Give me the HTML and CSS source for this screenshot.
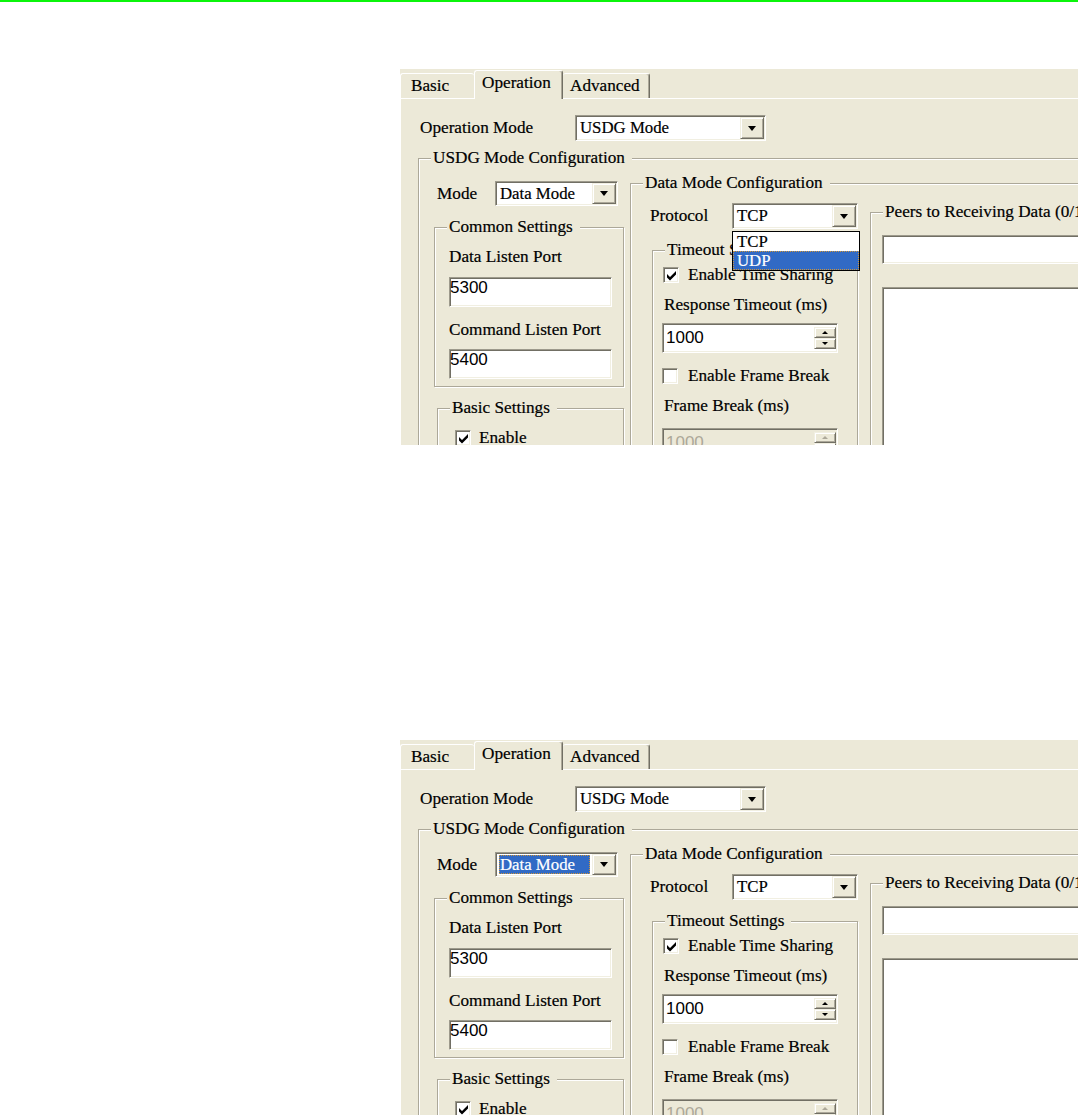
FILE: index.html
```html
<!DOCTYPE html>
<html lang="en">
<head>
  <meta charset="UTF-8" />
  <title>USDG Mode Settings</title>
  <link rel="stylesheet" href="styles.css">
</head>
<body>

  <div class="topline"></div>

  <!-- protocol drop-down open -->
  <div class="shot shot-1">
    <div class="tabs">
      <div class="tab tab-basic">Basic</div>
      <div class="tab tab-op">Operation</div>
      <div class="tab tab-adv">Advanced</div>
    </div>
    <div class="page">
      <div class="row op-row">
        <span class="lbl op-lbl">Operation Mode</span>
        <div class="combo combo-usdg"><span class="combo-text">USDG Mode</span><span class="combo-btn"></span></div>
      </div>
      <fieldset class="group usdg">
        <legend>USDG Mode Configuration</legend>
        <div class="usdg-body">
          <div class="usdg-left">
            <div class="row mode-row">
              <span class="lbl mode-lbl">Mode</span>
              <div class="combo combo-mode"><span class="combo-text">Data Mode</span><span class="combo-btn"></span></div>
            </div>
            <fieldset class="group common">
              <legend>Common Settings</legend>
              <div class="lbl field-lbl">Data Listen Port</div>
              <div class="edit port">5300</div>
              <div class="lbl field-lbl cmd-lbl">Command Listen Port</div>
              <div class="edit port cmd-port">5400</div>
            </fieldset>
            <fieldset class="group basic">
              <legend>Basic Settings</legend>
              <div class="row check-row basic-row">
                <span class="chk"><svg width="11" height="11" viewBox="0 0 11 11"><polygon points="1,4 4,7 10,1 10,4.5 4,10.5 1,7.5" fill="#000"/></svg></span>
                <span class="lbl">Enable</span>
              </div>
            </fieldset>
          </div>
          <fieldset class="group datamode">
            <legend>Data Mode Configuration</legend>
            <div class="dm-body">
              <div class="dm-left">
                <div class="row proto-row">
                  <span class="lbl proto-lbl">Protocol</span>
                  <div class="combo combo-proto">
                    <span class="combo-text">TCP</span><span class="combo-btn"></span>
                    <div class="droplist">
                      <div class="drop-item">TCP</div>
                      <div class="drop-item sel">UDP</div>
                    </div>
                  </div>
                </div>
                <fieldset class="group timeout">
                  <legend>Timeout Settings</legend>
                  <div class="row check-row share-row">
                    <span class="chk"><svg width="11" height="11" viewBox="0 0 11 11"><polygon points="1,4 4,7 10,1 10,4.5 4,10.5 1,7.5" fill="#000"/></svg></span>
                    <span class="lbl">Enable Time Sharing</span>
                  </div>
                  <div class="lbl sub-lbl">Response Timeout (ms)</div>
                  <div class="spin">
                    <span class="spin-text">1000</span>
                    <span class="spin-btns"><span class="up"></span><span class="down"></span></span>
                  </div>
                  <div class="row check-row break-row">
                    <span class="chk"></span>
                    <span class="lbl">Enable Frame Break</span>
                  </div>
                  <div class="lbl sub-lbl">Frame Break (ms)</div>
                  <div class="spin disabled">
                    <span class="spin-text">1000</span>
                    <span class="spin-btns"><span class="up"></span><span class="down"></span></span>
                  </div>
                </fieldset>
              </div>
              <fieldset class="group peers">
                <legend>Peers to Receiving Data (0/16)</legend>
                <div class="edit peer-edit"></div>
                <div class="listbox"></div>
              </fieldset>
            </div>
          </fieldset>
        </div>
      </fieldset>
    </div>
  </div>

  <!-- mode combo focused -->
  <div class="shot shot-2">
    <div class="tabs">
      <div class="tab tab-basic">Basic</div>
      <div class="tab tab-op">Operation</div>
      <div class="tab tab-adv">Advanced</div>
    </div>
    <div class="page">
      <div class="row op-row">
        <span class="lbl op-lbl">Operation Mode</span>
        <div class="combo combo-usdg"><span class="combo-text">USDG Mode</span><span class="combo-btn"></span></div>
      </div>
      <fieldset class="group usdg">
        <legend>USDG Mode Configuration</legend>
        <div class="usdg-body">
          <div class="usdg-left">
            <div class="row mode-row">
              <span class="lbl mode-lbl">Mode</span>
              <div class="combo combo-mode focus"><span class="combo-text">Data Mode</span><span class="combo-btn"></span></div>
            </div>
            <fieldset class="group common">
              <legend>Common Settings</legend>
              <div class="lbl field-lbl">Data Listen Port</div>
              <div class="edit port">5300</div>
              <div class="lbl field-lbl cmd-lbl">Command Listen Port</div>
              <div class="edit port cmd-port">5400</div>
            </fieldset>
            <fieldset class="group basic">
              <legend>Basic Settings</legend>
              <div class="row check-row basic-row">
                <span class="chk"><svg width="11" height="11" viewBox="0 0 11 11"><polygon points="1,4 4,7 10,1 10,4.5 4,10.5 1,7.5" fill="#000"/></svg></span>
                <span class="lbl">Enable</span>
              </div>
            </fieldset>
          </div>
          <fieldset class="group datamode">
            <legend>Data Mode Configuration</legend>
            <div class="dm-body">
              <div class="dm-left">
                <div class="row proto-row">
                  <span class="lbl proto-lbl">Protocol</span>
                  <div class="combo combo-proto"><span class="combo-text">TCP</span><span class="combo-btn"></span></div>
                </div>
                <fieldset class="group timeout">
                  <legend>Timeout Settings</legend>
                  <div class="row check-row share-row">
                    <span class="chk"><svg width="11" height="11" viewBox="0 0 11 11"><polygon points="1,4 4,7 10,1 10,4.5 4,10.5 1,7.5" fill="#000"/></svg></span>
                    <span class="lbl">Enable Time Sharing</span>
                  </div>
                  <div class="lbl sub-lbl">Response Timeout (ms)</div>
                  <div class="spin">
                    <span class="spin-text">1000</span>
                    <span class="spin-btns"><span class="up"></span><span class="down"></span></span>
                  </div>
                  <div class="row check-row break-row">
                    <span class="chk"></span>
                    <span class="lbl">Enable Frame Break</span>
                  </div>
                  <div class="lbl sub-lbl">Frame Break (ms)</div>
                  <div class="spin disabled">
                    <span class="spin-text">1000</span>
                    <span class="spin-btns"><span class="up"></span><span class="down"></span></span>
                  </div>
                </fieldset>
              </div>
              <fieldset class="group peers">
                <legend>Peers to Receiving Data (0/16)</legend>
                <div class="edit peer-edit"></div>
                <div class="listbox"></div>
              </fieldset>
            </div>
          </fieldset>
        </div>
      </fieldset>
    </div>
  </div>

</body>
</html>
```

FILE: styles.css
```css
* { box-sizing: border-box; }
body {
  margin: 0;
  background: #fff;
  color: #000;
  font-family: 'Liberation Serif', serif;
  font-size: 17.2px;
  -webkit-text-stroke: 0.2px #000;
}
.topline { height: 2px; background: #0bf50b; }

.shot {
  position: relative;
  width: 678px;
  height: 376px;
  margin-left: 400px;
  overflow: hidden;
  background: #ece9d8;
}
.shot-1 { margin-top: 67px; }
.shot-2 { margin-top: 295px; height: 375px; }

/* tabs */
.tabs { display: flex; align-items: flex-end; height: 29px; }
.tab {
  height: 25px;
  line-height: 24px;
  white-space: nowrap;
  border-top: 1px solid #fff;
  border-radius: 3px 3px 0 0;
}
.tab-basic { width: 74px; padding-left: 10px; border-left: 1px solid #fff; }
.tab-op {
  position: relative;
  width: 89px;
  height: 29px;
  margin-bottom: -1px;
  padding-left: 7px;
  background: #ece9d8;
  border-left: 1px solid #fff;
  border-right: 1px solid #716f64;
  box-shadow: inset -1px 0 #aca899;
}
.tab-adv {
  width: 87px;
  padding-left: 7px;
  border-right: 1px solid #716f64;
  box-shadow: inset -1px 0 #aca899;
}
.page { border-top: 1px solid #fff; border-left: 1px solid #fff; height: 360px; }

/* generic bits */
.row { display: flex; align-items: center; }
.lbl { line-height: 20px; white-space: nowrap; }

.group {
  margin: 0;
  padding: 0;
  min-width: 0;
  border: 1px solid #aca899;
  box-shadow: inset 1px 1px 0 #fff, 1px 1px 0 #fff;
}
.group > legend {
  margin-left: 12px;
  padding: 0 7px 0 2px;
  line-height: 20px;
  background: #ece9d8;
  white-space: nowrap;
}

.combo, .edit, .spin, .chk, .listbox {
  border: 1px solid;
  border-color: #9d9a8c #fff #fff #9d9a8c;
  box-shadow: inset 1px 1px 0 #716f64, inset -1px -1px 0 #f1efe2;
  background: #fff;
}
.combo-btn, .spin-btns span {
  background: #ece9d8;
  border: 1px solid;
  border-color: #f1efe2 #716f64 #716f64 #f1efe2;
  box-shadow: inset 1px 1px 0 #fff, inset -1px -1px 0 #aca899;
}

.combo { display: flex; height: 26px; padding: 1px; }
.combo-text {
  flex: 1;
  padding-left: 3px;
  font-size: 16.8px;
  line-height: 22px;
  white-space: nowrap;
  overflow: hidden;
}
.combo-btn {
  flex: none;
  width: 24px;
  display: flex;
  align-items: center;
  justify-content: center;
}
.combo-btn::after {
  content: "";
  border-left: 4.5px solid transparent;
  border-right: 4.5px solid transparent;
  border-top: 5px solid #000;
}
.combo.focus .combo-text {
  margin: 1px 2px;
  padding-left: 1px;
  line-height: 19px;
  background: #316ac5;
  color: #fff;
  -webkit-text-stroke: 0.2px #fff;
  outline: 1px dotted #ce953a;
  outline-offset: -1px;
}

.edit {
  height: 30px;
  padding: 0;
  font-family: 'Liberation Sans', sans-serif;
  font-size: 17px;
  line-height: 20px;
  -webkit-text-stroke: 0;
}

.chk { flex: none; width: 16px; height: 16px; }
.chk svg { display: block; margin: 1.5px; }
.check-row { height: 20px; gap: 8px; }

.spin { display: flex; height: 30px; padding: 1px; }
.spin-text {
  flex: 1;
  padding-left: 2px;
  font-family: 'Liberation Sans', sans-serif;
  font-size: 17px;
  line-height: 26px;
  -webkit-text-stroke: 0;
}
.spin-btns { flex: none; width: 22px; display: flex; flex-direction: column; padding: 2px 0; }
.spin-btns span { flex: 1; display: flex; align-items: center; justify-content: center; }
.spin-btns .up::after {
  content: "";
  border-left: 3px solid transparent;
  border-right: 3px solid transparent;
  border-bottom: 3px solid #000;
}
.spin-btns .down::after {
  content: "";
  border-left: 3px solid transparent;
  border-right: 3px solid transparent;
  border-top: 3px solid #000;
}
.spin.disabled { background: #ece9d8; color: #aca899; }
.spin.disabled .up::after { border-bottom-color: #aca899; }
.spin.disabled .down::after { border-top-color: #aca899; }

.listbox { height: 200px; }

/* drop-down list of the protocol combo */
.droplist {
  position: absolute;
  left: -1px;
  right: -3px;
  top: 27px;
  z-index: 2;
  background: #fff;
  border: 1px solid #000;
}
.drop-item { height: 19px; line-height: 19px; padding-left: 4px; font-size: 16.8px; }
.drop-item.sel {
  background: #316ac5;
  color: #fff;
  -webkit-text-stroke: 0.2px #fff;
  outline: 1px dotted #ce953a;
  outline-offset: -1px;
}

/* placement */
.op-row { margin: 16px 0 0 19px; height: 26px; }
.op-lbl { width: 155px; }
.combo-usdg { width: 191px; }

.usdg { margin: 7px 0 0 17px; width: 720px; }
.usdg-body { display: flex; align-items: flex-start; }
.usdg-left { flex: none; width: 205px; }
.mode-row { margin: 13px 0 0 18px; height: 25px; }
.mode-lbl { width: 58px; }
.combo-mode { width: 123px; height: 25px; }

.common { margin: 11px 0 0 15px; width: 190px; padding-bottom: 7px; }
.field-lbl { margin: 10px 0 0 14px; }
.port { margin: 10px 0 0 14px; width: 163px; }
.cmd-lbl { margin-top: 13px; }
.cmd-port { margin-top: 9px; }

.basic { margin: 11px 0 0 18px; width: 187px; height: 120px; }
.basic-row { margin: 10px 0 0 17px; gap: 8px; }

.datamode { margin: 5px 0 0 6px; width: 660px; }
.dm-body { display: flex; align-items: flex-start; }
.dm-left { flex: none; width: 227px; }
.proto-row { margin: 10px 0 0 19px; height: 26px; }
.proto-lbl { width: 82px; }
.combo-proto { position: relative; width: 126px; }

.timeout { margin: 11px 0 0 21px; width: 206px; padding-bottom: 20px; }
.share-row { margin: 5px 0 0 10px; gap: 9px; }
.sub-lbl { margin: 10px 0 0 11px; }
.spin { margin: 8px 0 0 9px; width: 176px; }
.break-row { margin: 13px 0 0 9px; gap: 10px; }
.spin.disabled { margin-top: 12px; }

.peers { margin: 9px 0 0 12px; width: 420px; }
.peer-edit { margin: 13px 0 0 11px; width: 390px; height: 29px; }
.listbox { margin: 23px 0 0 11px; width: 390px; }
```
